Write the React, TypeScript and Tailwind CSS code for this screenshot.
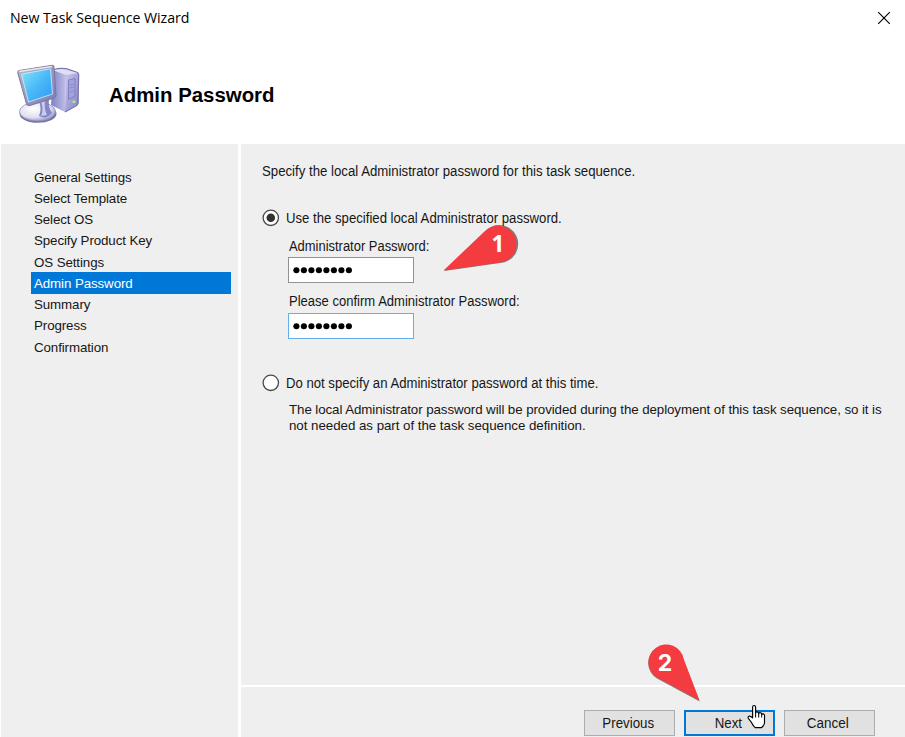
import React from "react";

const steps = [
  "General Settings",
  "Select Template",
  "Select OS",
  "Specify Product Key",
  "OS Settings",
  "Admin Password",
  "Summary",
  "Progress",
  "Confirmation",
];

function ComputerIcon() {
  return (
    <svg width="80" height="75" viewBox="0 0 80 75" className="block">
      <defs>
        <linearGradient id="screen" x1="0" y1="0" x2="1" y2="1">
          <stop offset="0" stopColor="#83e5f8" />
          <stop offset="0.5" stopColor="#4bb9f8" />
          <stop offset="1" stopColor="#2f97f4" />
        </linearGradient>
        <linearGradient id="frame" x1="0" y1="0" x2="1" y2="1">
          <stop offset="0" stopColor="#b8b8c8" />
          <stop offset="1" stopColor="#777bbb" />
        </linearGradient>
        <linearGradient id="front" x1="0" y1="0" x2="1" y2="1">
          <stop offset="0" stopColor="#c9c8ec" />
          <stop offset="1" stopColor="#8481c6" />
        </linearGradient>
        <linearGradient id="side" x1="0" y1="0" x2="1" y2="0">
          <stop offset="0" stopColor="#7f80c6" />
          <stop offset="1" stopColor="#c0c0e7" />
        </linearGradient>
        <radialGradient id="base" cx="0.4" cy="0.35" r="0.7">
          <stop offset="0" stopColor="#ffffff" />
          <stop offset="0.65" stopColor="#e0e0ef" />
          <stop offset="1" stopColor="#8f8fc0" />
        </radialGradient>
      </defs>
      <path d="M44 14.5 56 13.5 69 18 57 21Z" fill="#dedef5" />
      <path d="M43 15 56 20 55 57 41 50Z" fill="url(#side)" />
      <path d="M56 20 68.5 18V49L55 57Z" fill="url(#front)" />
      <path d="M44 14.5Q50 12.8 56 13.7L67 17.3Q68.8 18 68.7 20L68 48Q67.8 50 66 51L55 57" fill="none" stroke="#7775aa" strokeWidth="1.2" />
      <path d="m58.5 25 6.5-1.5V41l-6.5 3.5Z" fill="#a3a3dc" stroke="#7876be" strokeWidth="0.8" />
      <path d="m60 30 4-1m-4 4 4-1m-4 5 4-1.5" stroke="#8986c8" strokeWidth="0.9" />
      <ellipse cx="64" cy="46.8" rx="1.8" ry="1.5" fill="#9ee978" />
      <ellipse cx="28" cy="58.8" rx="18.5" ry="9" fill="#7474a8" />
      <ellipse cx="27.5" cy="56.6" rx="18" ry="9.4" fill="url(#base)" stroke="#9292bd" strokeWidth="0.8" />
      <path d="M29 46 39 43Q38 53 42 58 36 65 29 61Q32 54 29 46Z" fill="#8586ca" />
      <path d="M31 47 35 45Q34 55 37 60L31 61Q34 54 31 47Z" fill="#cacbed" />
      <path d="M9 15.5 42 10.3Q44 10 44 12L46 40Q46 42 44 43L20 50.5Q17 51.3 16.3 48.5L7.8 18Q7.2 16 9 15.5Z" fill="url(#frame)" stroke="#747394" strokeWidth="0.9" />
      <path d="M9 16.5 42 11.5" stroke="#e9e9f2" strokeWidth="1.3" />
      <path d="M11.5 19 40.5 13.8 42.5 39 18.5 47Z" fill="url(#screen)" stroke="#dbeff8" strokeWidth="0.8" />
    </svg>
  );
}

function PasswordBox({ active }: { active?: boolean }) {
  return (
    <div className={`flex h-[26px] w-[126px] items-center border bg-white pl-1 ${active ? "border-[#65b0ec]" : "border-[#929292]"}`}>
      <svg width="62" height="8" viewBox="0 0 62 8">
        {[0, 1, 2, 3, 4, 5, 6, 7].map((n) => (
          <circle key={n} cx={3.4 + n * 7.5} cy="4.2" r="3.05" fill="black" />
        ))}
      </svg>
    </div>
  );
}

function Radio({ checked }: { checked?: boolean }) {
  return (
    <svg width="18" height="18" viewBox="0 0 18 18" className="shrink-0">
      <circle cx="8.8" cy="8.8" r="7.7" fill="white" stroke="#4a4a4a" strokeWidth="1.3" />
      {checked && <circle cx="8.8" cy="8.8" r="4.3" fill="#333" />}
    </svg>
  );
}

export default function App() {
  return (
    <div className="relative flex h-[737px] w-[905px] flex-col overflow-hidden bg-white font-['Liberation_Sans',Arial,sans-serif] text-[13.33px] text-[#161616]">
      <div className="flex h-9 shrink-0 items-center justify-between pl-2.5 pr-[14px]">
        <span className="origin-left scale-x-[97%] whitespace-nowrap font-['Open_Sans','Noto_Sans',sans-serif] text-[14.6px] tracking-[-0.05px] text-black">New Task Sequence Wizard</span>
        <svg width="14" height="14" viewBox="0 0 14 14"><path d="m1.2 1.2 11.6 11.6m0-11.6L1.2 12.8" stroke="black" strokeWidth="1.15" /></svg>
      </div>
      <header className="flex h-[108px] shrink-0 items-start pl-2.5 pt-[19px]">
        <ComputerIcon />
        <h1 className="ml-[19px] mt-[26px] origin-left scale-x-[102%] whitespace-nowrap text-[20px] font-bold leading-7 text-black">Admin Password</h1>
      </header>
      <div className="flex min-h-0 flex-1 gap-[3px] pl-px">
        <aside className="w-[237px] shrink-0 bg-[#efefef] pl-[30px] pt-[22px]">
          {steps.map((step) => (
            <div key={step} className={`h-[21.25px] w-[200px] whitespace-nowrap pl-[3px] pt-[0.5px] leading-[21.25px] tracking-[-0.1px] ${step === "Admin Password" ? "bg-[#0078d7] text-white" : ""}`}>
              {step}
            </div>
          ))}
        </aside>
        <div className="flex min-w-0 flex-1 flex-col gap-0.5">
          <main className="h-[541px] shrink-0 whitespace-nowrap bg-[#efefef] pl-[21px] pt-[17px] text-[14px]">
            <p className="h-5 origin-left scale-x-[94.4%] leading-5">Specify the local Administrator password for this task sequence.</p>
            <div className="mt-[27px] flex h-5 items-center gap-[6px]">
              <Radio checked />
              <span className="origin-left scale-x-[94%]">Use the specified local Administrator password.</span>
            </div>
            <div className="pl-[26px]">
              <div className="mt-[8px] h-5 w-fit origin-left scale-x-[92.5%] pl-px leading-5">Administrator Password:</div>
              <div className="mt-px"><PasswordBox /></div>
              <div className="mt-[8px] h-5 w-fit origin-left scale-x-[93.2%] pl-px leading-5">Please confirm Administrator Password:</div>
              <div className="mt-[2px]"><PasswordBox active /></div>
            </div>
            <div className="mt-[34px] flex h-5 items-center gap-[6px]">
              <Radio />
              <span className="origin-left scale-x-[93.8%]">Do not specify an Administrator password at this time.</span>
            </div>
            <div className="mt-[9px] pl-[27px] text-[13.33px] leading-[16px]">
              <div className="tracking-[-0.088px]">The local Administrator password will be provided during the deployment of this task sequence, so it is</div>
              <div className="tracking-[-0.04px]">not needed as part of the task sequence definition.</div>
            </div>
          </main>
          <footer className="flex flex-1 items-start gap-[9px] bg-[#efefef] pl-[343px] pt-[23px] text-[14px]">
            <button className="h-[26px] w-[91px] border border-[#adadad] bg-[#e1e1e1] pr-[3px]"><span className="inline-block scale-x-[95%]">Previous</span></button>
            <button className="h-[26px] w-[91px] border-2 border-[#0078d7] bg-[#e1e1e1] pr-[3px]"><span className="inline-block scale-x-[95%]">Next</span></button>
            <button className="h-[26px] w-[91px] border border-[#adadad] bg-[#e1e1e1] pr-[3px]"><span className="inline-block scale-x-[96%]">Cancel</span></button>
          </footer>
        </div>
      </div>
      <svg width="82" height="52" viewBox="440 223 82 52" className="absolute left-[440px] top-[223px]">
        <path d="M444 271 484.5 232A19 19 0 1 1 500 263Z" fill="#555" opacity="0.75" />
        <path d="M443.5 270.4 484.5 231.5A18.5 18.5 0 1 1 500 262.5Z" fill="#f43b40" />
        <text x="498" y="252" textAnchor="middle" fontFamily="Open Sans" fontSize="22.5" fontWeight="bold" fill="white">1</text>
      </svg>
      <svg width="58" height="62" viewBox="645 642 58 62" className="absolute left-[645px] top-[642px]">
        <path d="M699.7 701.5 683.5 660A17.8 17.8 0 1 0 657 678.5Z" fill="#555" opacity="0.75" />
        <path d="M699.5 700.5 683.7 659A17.8 17.8 0 1 0 657 677.5Z" fill="#f43b40" />
        <text x="665" y="670.5" textAnchor="middle" fontFamily="Inter" fontSize="23" fontWeight="bold" fill="white">2</text>
      </svg>
      <svg width="20" height="26" viewBox="0 0 20 26" className="absolute left-[747px] top-[704px]">
        <path d="M5.6 14V3.2Q5.6 1.5 7.1 1.5T8.6 3.2V9Q9 7.5 10.4 8T11.7 9.8Q12.2 8.1 13.6 8.7T14.7 10.5Q16.1 9.2 17.2 10.5 17.8 11.3 17.5 13V19Q17 22.1 14.5 23.6H8.2Q5.8 21.5 4.2 18L1.5 14.6Q.5 12.8 2 12.2 3.7 11.7 5.6 14Z" fill="white" stroke="black" strokeWidth="1.15" strokeLinejoin="round" />
        <path d="M8.6 8.5v5m3.1-4v4m3-3v3" stroke="black" strokeWidth="1" />
      </svg>
    </div>
  );
}
